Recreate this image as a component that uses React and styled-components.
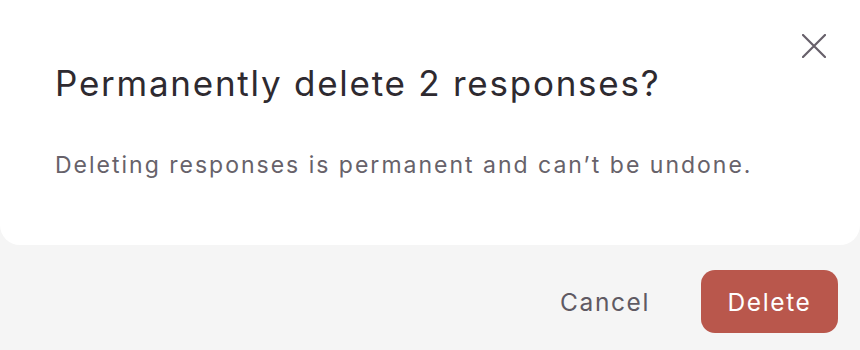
import React from "react";
import styled, { createGlobalStyle } from "styled-components";

const Global = createGlobalStyle`
  html, body { margin: 0; padding: 0; background: #f5f5f5; }
  body { font-family: Inter, "Noto Sans", sans-serif; -webkit-font-smoothing: antialiased; }
`;

const Page = styled.div`
  width: 860px;
  height: 350px;
  background: #f5f5f5;
  display: flex;
  flex-direction: column;
  overflow: hidden;
`;

const Card = styled.div`
  position: relative;
  height: 245px;
  box-sizing: border-box;
  background: #ffffff;
  border-radius: 0 0 20px 20px;
  padding: 61px 56px 0 55px;
`;

const Title = styled.h2`
  margin: 0;
  font-size: 35px;
  font-weight: 400;
  line-height: 44px;
  color: #2e2a30;
  letter-spacing: 1.75px;
  white-space: nowrap;
`;

const Body = styled.p`
  margin: 45px 0 0;
  font-size: 23px;
  line-height: 30px;
  color: #67626a;
  letter-spacing: 2px;
  white-space: nowrap;
`;

const Close = styled.button`
  position: absolute;
  top: 30px;
  right: 30px;
  width: 32px;
  height: 32px;
  padding: 0;
  border: none;
  background: transparent;
  display: flex;
  align-items: center;
  justify-content: center;
  cursor: pointer;
`;

const Footer = styled.div`
  flex: 1;
  display: flex;
  justify-content: flex-end;
  align-items: center;
  gap: 27px;
  padding: 8px 22px 0 0;
`;

const Button = styled.button`
  font-family: Inter, "Noto Sans", sans-serif;
  font-size: 24.5px;
  font-weight: 400;
  letter-spacing: 1.6px;
  height: 63px;
  border: none;
  border-radius: 14px;
  cursor: pointer;
  padding: 0 ${(p) => (p.$primary ? "24px" : "24px")};
  background: ${(p) => (p.$primary ? "#b9574c" : "transparent")};
  color: ${(p) => (p.$primary ? "#ffffff" : "#5f5a63")};
  min-width: ${(p) => (p.$primary ? "137px" : "0")};
`;

export default function App() {
  return (
    <Page>
      <Global />
      <Card>
        <Title>Permanently delete 2 responses?</Title>
        <Body>Deleting responses is permanent and can’t be undone.</Body>
        <Close aria-label="Close">
          <svg width="24" height="24" viewBox="0 0 24 24" fill="none" stroke="#67606a" strokeWidth="2.2" strokeLinecap="round">
            <path d="M1 1 L23 23 M23 1 L1 23" />
          </svg>
        </Close>
      </Card>
      <Footer>
        <Button>Cancel</Button>
        <Button $primary>Delete</Button>
      </Footer>
    </Page>
  );
}
